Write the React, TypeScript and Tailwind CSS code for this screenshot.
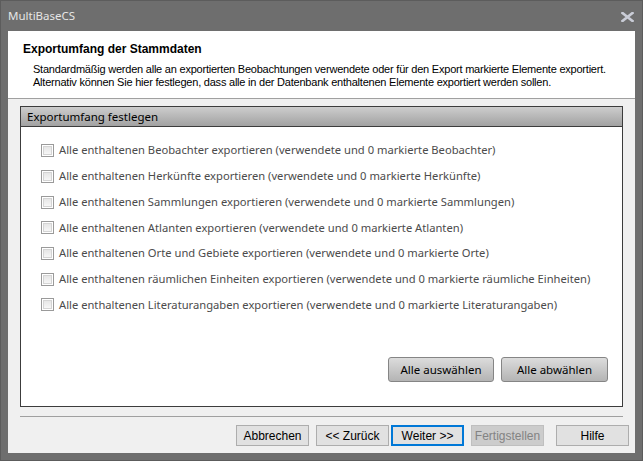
import { useState } from "react";

const items = [
  "Alle enthaltenen Beobachter exportieren (verwendete und 0 markierte Beobachter)",
  "Alle enthaltenen Herkünfte exportieren (verwendete und 0 markierte Herkünfte)",
  "Alle enthaltenen Sammlungen exportieren (verwendete und 0 markierte Sammlungen)",
  "Alle enthaltenen Atlanten exportieren (verwendete und 0 markierte Atlanten)",
  "Alle enthaltenen Orte und Gebiete exportieren (verwendete und 0 markierte Orte)",
  "Alle enthaltenen räumlichen Einheiten exportieren (verwendete und 0 markierte räumliche Einheiten)",
  "Alle enthaltenen Literaturangaben exportieren (verwendete und 0 markierte Literaturangaben)",
];

function CheckRow({ label, checked, onToggle }: { label: string; checked: boolean; onToggle: () => void }) {
  return (
    <div className="flex h-[25.7px] items-center gap-[5px] pl-[20px]" onClick={onToggle}>
      <div className="flex h-[13px] w-[13px] shrink-0 items-center justify-center border border-[#9a9a9a] bg-white">
        <div className="h-[9px] w-[9px] border border-[#d4d4d4] bg-gradient-to-b from-[#e6e6e6] to-[#f6f6f6] text-[8px] leading-[7px] text-[#333]">
          {checked ? "✓" : ""}
        </div>
      </div>
      <span className="whitespace-nowrap text-[11.2px] text-[#4b4b4b]">{label}</span>
    </div>
  );
}

function WizButton({ children, kind }: { children: string; kind?: "focus" | "disabled" }) {
  const base = "flex h-[21px] w-[73px] items-center justify-center text-[12px]";
  if (kind === "focus")
    return <button className={`${base} border-2 border-[#0078d7] bg-[#e1e1e1] text-black`}>{children}</button>;
  if (kind === "disabled")
    return <button className={`${base} border border-[#bfbfbf] bg-[#cccccc] text-[#838383]`}>{children}</button>;
  return <button className={`${base} border border-[#adadad] bg-[#e1e1e1] text-black`}>{children}</button>;
}

export default function App() {
  const [checked, setChecked] = useState<boolean[]>(items.map(() => false));
  const toggle = (i: number) => setChecked((c) => c.map((v, j) => (j === i ? !v : v)));

  return (
    <div className="flex h-[461px] w-[643px] flex-col border border-[#5c5c5c] bg-[#6e6e6e] font-['Liberation_Sans',Arial,sans-serif]">
      {/* Title bar */}
      <div className="flex h-[30px] shrink-0 items-center justify-between pl-[7px] pr-[8px]">
        <span className="font-['Noto_Sans',sans-serif] text-[11.5px] text-[#e6e6e6]">MultiBaseCS</span>
        <svg width="13" height="10" viewBox="0 0 13 10" className="mt-[1px]">
          <path d="M1.5 1 L11.5 9 M11.5 1 L1.5 9" stroke="#c9ccd6" strokeWidth="2.6" strokeLinecap="square" />
        </svg>
      </div>

      <div className="mx-[7px] mb-[7px] flex flex-1 flex-col bg-[#f0f0f0]">
        {/* Header */}
        <div className="h-[68px] shrink-0 border-b border-[#a0a0a0] bg-white pl-[15px] pt-[11px]">
          <div className="text-[12px] font-bold leading-[14px] text-black">Exportumfang der Stammdaten</div>
          <div className="mt-[7px] whitespace-nowrap pl-[10px] text-[11px] leading-[13px] tracking-[-0.22px] text-black">
            <div>Standardmäßig werden alle an exportierten Beobachtungen verwendete oder für den Export markierte Elemente exportiert.</div>
            <div>Alternativ können Sie hier festlegen, dass alle in der Datenbank enthaltenen Elemente exportiert werden sollen.</div>
          </div>
        </div>

        {/* Body */}
        <div className="flex flex-1 flex-col px-[12px] pt-[7px]">
          <div className="flex h-[301px] flex-col border border-[#3c3c3c] bg-white font-['Noto_Sans',sans-serif]">
            <div className="flex h-[20px] shrink-0 items-center border-b border-[#3c3c3c] bg-gradient-to-b from-[#cdcdcd] to-[#a2a2a2] pl-[6px] text-[11.5px] text-black">
              Exportumfang festlegen
            </div>
            <div className="flex flex-col pt-[11px]">
              {items.map((t, i) => (
                <CheckRow key={i} label={t} checked={checked[i]} onToggle={() => toggle(i)} />
              ))}
            </div>
            <div className="mt-[39px] flex justify-end gap-[7px] pr-[14px]">
              <button className="h-[25px] w-[106px] rounded-[3px] border border-[#858585] bg-gradient-to-b from-[#dcdcdc] to-[#b4b4b4] text-[11.5px] text-black">
                Alle auswählen
              </button>
              <button className="h-[25px] w-[107px] rounded-[3px] border border-[#858585] bg-gradient-to-b from-[#dcdcdc] to-[#b4b4b4] text-[11.5px] text-black">
                Alle abwählen
              </button>
            </div>
          </div>
          <div className="mt-[9px] h-[2px] border-t border-[#a0a0a0] bg-[#f0f0f0]" />
        </div>

        {/* Footer */}
        <div className="flex h-[35px] shrink-0 items-start justify-end pr-[6px] pt-[7px]">
          <WizButton>Abbrechen</WizButton>
          <div className="w-[7px]" />
          <WizButton>{"<< Zurück"}</WizButton>
          <div className="w-[2px]" />
          <WizButton kind="focus">{"Weiter >>"}</WizButton>
          <div className="w-[7px]" />
          <WizButton kind="disabled">Fertigstellen</WizButton>
          <div className="w-[12px]" />
          <WizButton>Hilfe</WizButton>
        </div>
      </div>
    </div>
  );
}
